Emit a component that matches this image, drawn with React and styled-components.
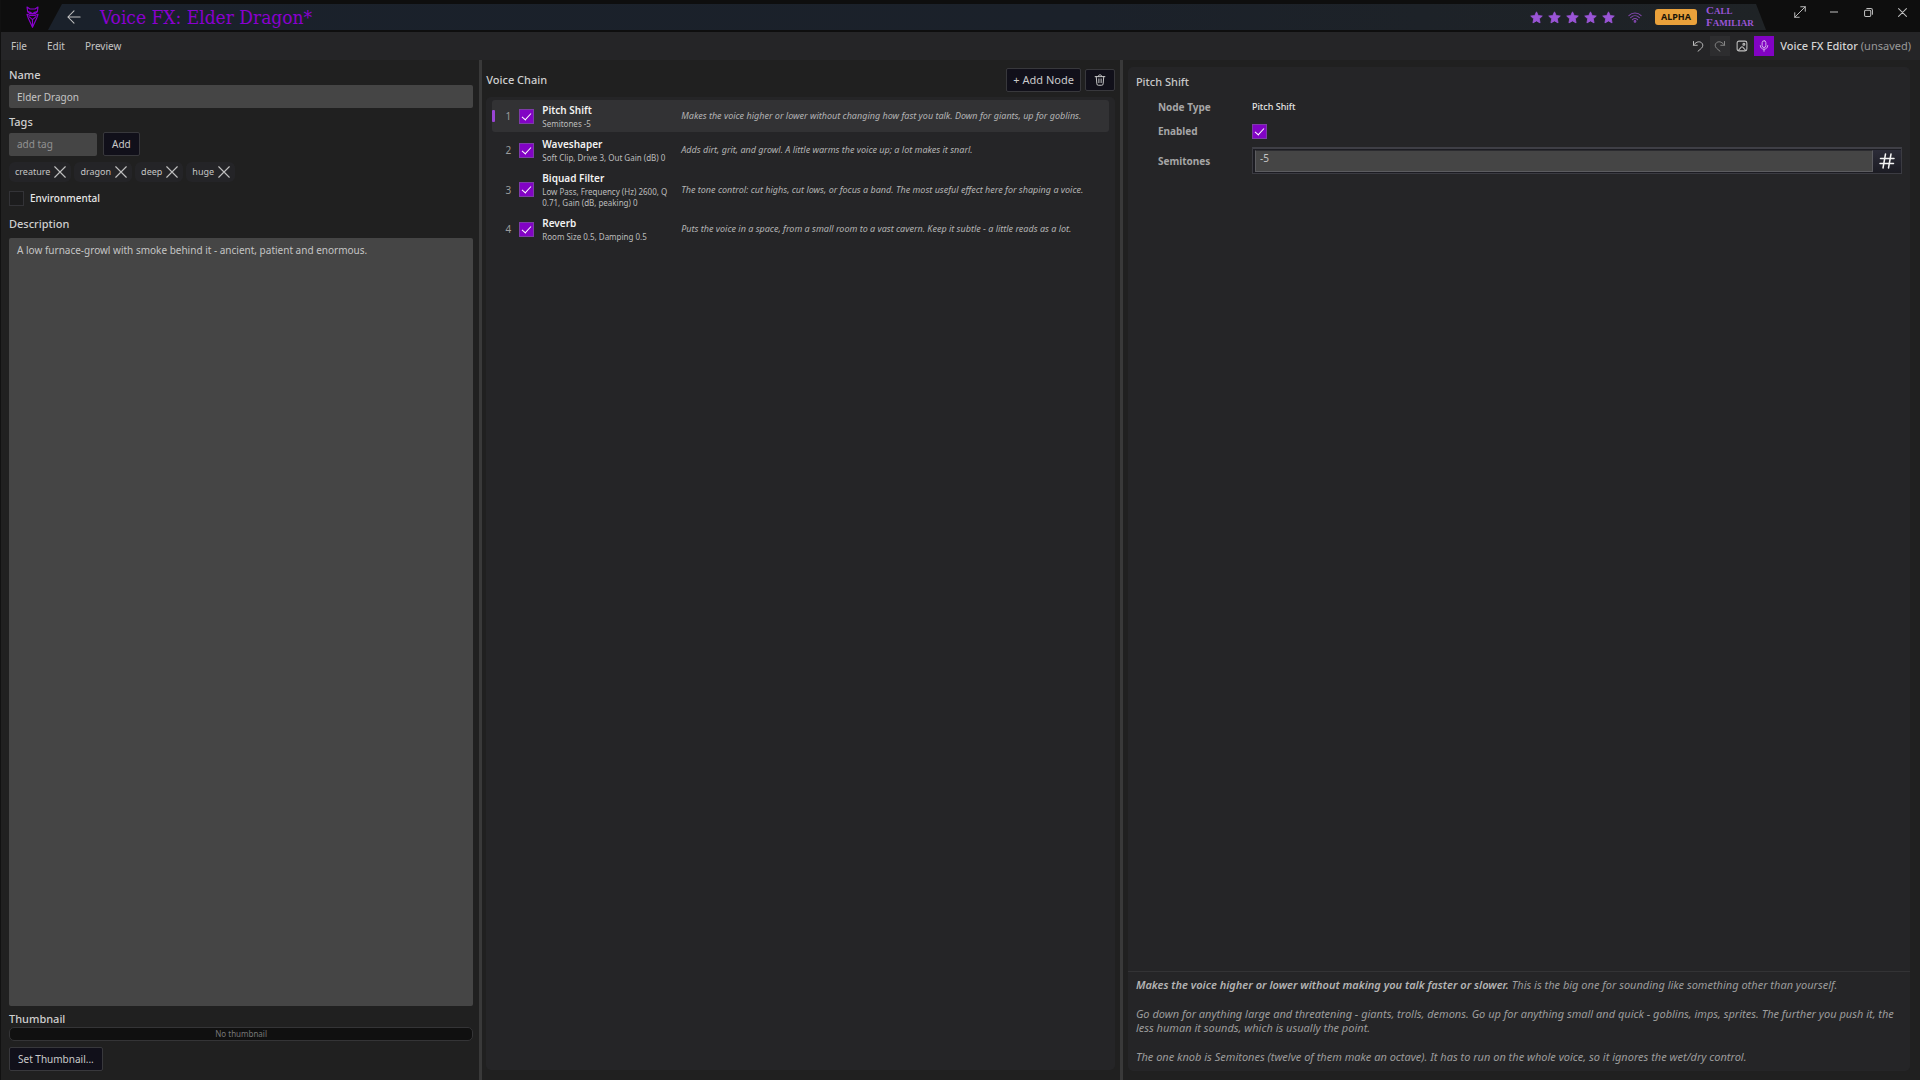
import { useState } from 'react'
import styled, { createGlobalStyle } from 'styled-components'

const GlobalStyle = createGlobalStyle`
    * {
        box-sizing: border-box;
    }

    html, body, #root {
        height: 100%;
    }

    body {
        margin: 0;
        background-color: #202020;
        color: #c4c4c4;
        font-family: "Noto Sans", sans-serif;
        font-size: 11px;
        line-height: 16px;
    }

    button, input, textarea {
        margin: 0;
        font: inherit;
        color: inherit;
    }

    h1, h2, h3, p {
        margin: 0;
    }
`

const Window = styled.div`
    display: flex;
    flex-direction: column;
    height: 100vh;
    border-left: 1px solid #111111;
`

const TitleBar = styled.header`
    display: flex;
    height: 32px;
    flex-shrink: 0;
    background-color: #0e0e0e;
`

const Logo = styled.div`
    width: 47px;
    display: flex;
    justify-content: flex-end;
    padding: 6px 9px 0 0;
`

const Ribbon = styled.div`
    flex: 1;
    height: 26px;
    margin-top: 4px;
    padding: 0 11px 0 19px;
    display: flex;
    align-items: center;
    background: linear-gradient(90deg, #1a212b, #1b212a 60%, #1f2326);
    clip-path: polygon(14px 0, calc(100% - 10px) 0, 100% 100%, 0 100%);

    h1 {
        flex: 1;
        margin-left: 19px;
        color: #8a00cf;
        font: 400 19px "DejaVu Serif Condensed", "DejaVu Serif", serif;
    }
`

const IconButton = styled.button`
    width: ${props => props.$size || 20}px;
    height: ${props => props.$size || 20}px;
    padding: 0;
    display: flex;
    justify-content: center;
    align-items: center;
    border: none;
    background-color: ${props => props.$bg || 'transparent'};
    color: ${props => props.$color || '#c0c0c0'};
    cursor: pointer;
`

const Stars = styled.div`
    display: flex;
    gap: 5px;
    margin-right: 13px;
    color: #9a55d6;
`

const Alpha = styled.span`
    width: 42px;
    height: 16px;
    margin: 0 9px 0 13px;
    border-radius: 3px;
    background-color: #e9a13b;
    color: #1a1408;
    font-size: 9px;
    font-weight: 700;
    line-height: 16px;
    text-align: center;
`

const Brand = styled.div`
    width: 49px;
    color: #9a55d6;
    font: 700 9px/11px "Liberation Serif", serif;
    text-transform: uppercase;

    span {
        display: block;
    }

    span::first-letter {
        font-size: 11px;
    }
`

const WindowControls = styled.div`
    display: flex;
    margin-left: 17px;
    padding-right: 1px;

    button {
        width: 34px;
        height: 24px;
    }
`

const MenuBar = styled.nav`
    height: 28px;
    flex-shrink: 0;
    display: flex;
    align-items: center;
    padding-right: 9px;
    background-color: #252527;
`

const MenuItem = styled.button`
    height: 24px;
    padding: 0 10px;
    border: none;
    background: none;
    font-size: 10px;

    &:hover {
        background-color: #333335;
    }
`

const Tools = styled.div`
    display: flex;
    align-items: center;
    gap: 2px;
    margin-left: auto;
`

const DocStatus = styled.p`
    margin-left: 4px;
    color: #999999;

    strong {
        color: #d4d4d4;
        font-weight: 500;
    }
`

const Panes = styled.main`
    flex: 1;
    min-height: 0;
    display: grid;
    grid-template-columns: 3fr 3px 4fr 3px 5fr;
`

const Splitter = styled.div`
    background-color: #393939;
`

const DetailsPane = styled.section`
    display: flex;
    flex-direction: column;
    align-items: flex-start;
    padding: 7px 6px 9px 8px;
`

const Label = styled.label`
    font-size: 11px;
    font-weight: 500;
    color: #cfcfcf;
`

const TextInput = styled.input`
    width: ${props => props.$width || '100%'};
    height: 23px;
    padding: 0 8px;
    border: none;
    border-radius: 2px;
    background-color: #454545;
    font-size: 10px;
    outline: none;

    &::placeholder {
        color: #929292;
    }
`

const Field = styled.div`
    width: 100%;
    display: flex;
    flex-direction: column;
    gap: 2px;
    margin-bottom: 6px;
`

const TagEntry = styled.div`
    display: flex;
    align-items: center;
    gap: 6px;
`

const Button = styled.button`
    height: ${props => props.$height || 24}px;
    padding: 0 ${props => props.$large ? 6 : 8}px;
    display: flex;
    align-items: center;
    justify-content: center;
    border: 1px solid #38383c;
    border-radius: 2px;
    background-color: #11101a;
    color: #cacaca;
    font-size: ${props => props.$large ? 11 : 10}px;
    cursor: pointer;
`

const Tags = styled.ul`
    display: flex;
    gap: 3px;
    margin: 0 0 8px;
    padding: 0;
    list-style: none;
`

const Tag = styled.li`
    height: 20px;
    display: flex;
    align-items: center;
    gap: 4px;
    padding: 0 5px 0 6px;
    border-radius: 6px;
    background-color: #242427;
    font-size: 9px;
`

const CheckBox = styled.input.attrs({ type: 'checkbox' })`
    appearance: none;
    width: 15px;
    height: 15px;
    flex-shrink: 0;
    display: grid;
    justify-content: center;
    border: 1px solid #333337;
    background-color: #1c1c1d;

    &:checked {
        border-color: #7d3ba8;
        background-color: #8203c4;
    }

    &:checked::after {
        content: "";
        width: 4px;
        height: 8px;
        margin-top: 1px;
        border: solid #ffffff;
        border-width: 0 1px 1px 0;
        transform: rotate(42deg);
    }
`

const CheckRow = styled.div`
    display: flex;
    align-items: center;
    gap: 6px;
    margin-bottom: 10px;

    label {
        color: #e6e6e6;
        font-size: 10px;
        font-weight: 500;
    }
`

const Description = styled.textarea`
    width: 100%;
    flex: 1;
    margin: 6px 0 5px;
    padding: 4px 8px;
    border: none;
    border-radius: 2px;
    background-color: #454545;
    font-size: 10px;
    resize: none;
    outline: none;
`

const Thumbnail = styled.div`
    width: 100%;
    height: 14px;
    margin-bottom: 6px;
    border: 1px solid #343436;
    border-radius: 5px;
    background-color: #101010;
    color: #777777;
    font-size: 8px;
    line-height: 12px;
    text-align: center;
`

const ChainPane = styled.section`
    display: flex;
    flex-direction: column;
    padding: 8px 5px 10px 4px;
`

const ChainHeader = styled.div`
    display: flex;
    align-items: center;
    gap: 4px;
    margin-bottom: 5px;

    h2 {
        flex: 1;
        color: #cfcfcf;
        font-size: 11px;
        font-weight: 500;
    }
`

const Card = styled.div`
    flex: 1;
    display: flex;
    flex-direction: column;
    border-radius: 5px;
    background-color: #252527;
`

const NodeList = styled.ol`
    display: flex;
    flex-direction: column;
    gap: 2px;
    margin: 0;
    padding: 3px 6px;
    list-style: none;
`

const NodeRow = styled.li`
    position: relative;
    display: grid;
    grid-template-columns: 19px 15px 131px 1fr;
    align-items: center;
    column-gap: 8px;
    padding: 3px 0;
    border-radius: 3px;
    background-color: ${props => props.$selected ? '#323234' : 'transparent'};

    &::before {
        content: "";
        display: ${props => props.$selected ? 'block' : 'none'};
        position: absolute;
        left: 0;
        top: 10px;
        bottom: 10px;
        width: 3px;
        border-radius: 1px;
        background-color: #9a45d4;
    }
`

const NodeIndex = styled.span`
    color: #9c9c9c;
    font-size: 10px;
    text-align: right;
`

const NodeInfo = styled.div`
    h3 {
        color: #f2f2f2;
        font-size: 10px;
        font-weight: 600;
        line-height: 15px;
    }

    p {
        color: #bdbdbd;
        font-size: 8px;
        line-height: 11px;
    }
`

const NodeHint = styled.p`
    color: #b4b4b4;
    font-size: 9px;
    font-style: italic;
    line-height: 12px;
`

const InspectorPane = styled.section`
    display: flex;
    padding: 7px 10px 9px 5px;
`

const InspectorTitle = styled.h2`
    padding: 7px 8px 5px;
    color: #c8c8c8;
    font-size: 11px;
    font-weight: 500;
    line-height: 16px;
`

const Properties = styled.div`
    flex: 1;
    display: grid;
    grid-template-columns: 94px 1fr;
    grid-template-rows: 24px 24px 35px;
    align-items: center;
    align-content: start;
    padding: 0 8px 0 30px;
`

const PropertyLabel = styled.label`
    color: #a6a6a6;
    font-size: 10px;
    font-weight: 700;
`

const PropertyValue = styled.span`
    color: #e4e4e4;
    font-size: 9px;
    font-weight: 500;
`

const NumberField = styled.div`
    height: 27px;
    display: flex;
    padding: 1px 0 1px 2px;
    border: 1px solid #3b3b42;
    border-top: 2px solid #3f3f46;
    background-color: #1c1c22;

    input {
        flex: 1;
        min-width: 0;
        padding: 0 4px 7px;
        border: 1px solid #5c5c60;
        border-top-color: #2c2c30;
        background-color: #454545;
        font-size: 10px;
        line-height: 14px;
        outline: none;
    }
`

const HashButton = styled(IconButton)`
    width: 28px;
    height: 100%;
    background: linear-gradient(#2c2c38, #1c1c24);
`

const Help = styled.div`
    padding: 6px 8px 7px;
    border-top: 1px solid #333335;
    color: #9c9c9c;
    font-size: 11px;
    font-style: italic;
    line-height: 14px;

    p + p {
        margin-top: 15px;
    }

    strong {
        color: #b4b4b4;
        font-weight: 600;
    }
`

const Icon = ({ size = 12, view = 16, width = 1, children }) => (
    <svg width={size} height={size} viewBox={`0 0 ${view} ${view}`} fill="none" stroke="currentColor"
        strokeWidth={width} strokeLinecap="round" strokeLinejoin="round" aria-hidden="true">
        {children}
    </svg>
)

const Star = () => (
    <svg width="13" height="13" viewBox="0 0 24 24" fill="currentColor" stroke="currentColor" strokeWidth="1.5" strokeLinejoin="round">
        <path d="M12 1.5l3.2 6.9 7.5.9-5.5 5.2 1.4 7.5L12 18.3 5.4 22l1.4-7.5L1.3 9.3l7.5-.9z" />
    </svg>
)

const LogoMark = () => (
    <svg width="13" height="22" viewBox="0 0 39 66" fill="none" stroke="#8a00cf" strokeWidth="3.4" strokeLinejoin="round">
        <path d="M3 3l9 6h15l9-6-2 14-6 6H11l-6-6z" />
        <path d="M5 17l8 2 6.5 4 6.5-4 8-2" />
        <path d="M3 25l8 3h17l8-3-4 12-12.5 27L7 37z" />
        <path d="M8 31l11.5 10L31 31M19.5 41v21" />
    </svg>
)

const nodes = [
    { name: 'Pitch Shift', summary: 'Semitones -5', hint: 'Makes the voice higher or lower without changing how fast you talk. Down for giants, up for goblins.' },
    { name: 'Waveshaper', summary: 'Soft Clip, Drive 3, Out Gain (dB) 0', hint: 'Adds dirt, grit, and growl. A little warms the voice up; a lot makes it snarl.' },
    { name: 'Biquad Filter', summary: 'Low Pass, Frequency (Hz) 2600, Q 0.71, Gain (dB, peaking) 0', hint: 'The tone control: cut highs, cut lows, or focus a band. The most useful effect here for shaping a voice.' },
    { name: 'Reverb', summary: 'Room Size 0.5, Damping 0.5', hint: 'Puts the voice in a space, from a small room to a vast cavern. Keep it subtle - a little reads as a lot.' },
]

function Header() {
    return (
        <TitleBar>
            <Logo><LogoMark /></Logo>
            <Ribbon>
                <IconButton $size={14} aria-label="Back">
                    <Icon size={14} width={1.2}><path d="M15 8H1M8 1L1 8l7 7" /></Icon>
                </IconButton>
                <h1>Voice FX: Elder Dragon*</h1>
                <Stars>{[1, 2, 3, 4, 5].map(n => <Star key={n} />)}</Stars>
                <IconButton as="span" $size={14} $color="#8247ad">
                    <Icon size={14} width={1.2}>
                        <path d="M1 6.5c4-4 10-4 14 0M3 8.8c3-3 7-3 10 0M5 11c2-1.8 4-1.8 6 0" />
                        <circle cx="8" cy="13" r="1" fill="currentColor" />
                    </Icon>
                </IconButton>
                <Alpha>ALPHA</Alpha>
                <Brand><span>Call</span><span>Familiar</span></Brand>
            </Ribbon>
            <WindowControls>
                <IconButton aria-label="Full screen">
                    <Icon width={1.3}><path d="M1 15L15 1M9 1h6v6M1 9v6h6" /></Icon>
                </IconButton>
                <IconButton aria-label="Minimize">
                    <Icon size={8}><path d="M0 8h16" strokeWidth="2" /></Icon>
                </IconButton>
                <IconButton aria-label="Restore">
                    <Icon size={9} width={1.8}>
                        <rect x="1" y="4" width="11" height="11" rx="2" />
                        <path d="M5 1h7a3 3 0 0 1 3 3v7" />
                    </Icon>
                </IconButton>
                <IconButton aria-label="Close">
                    <Icon size={9} width={1.8}><path d="M1 1l14 14M15 1L1 15" /></Icon>
                </IconButton>
            </WindowControls>
        </TitleBar>
    )
}

function Menu() {
    return (
        <MenuBar>
            <MenuItem>File</MenuItem>
            <MenuItem>Edit</MenuItem>
            <MenuItem>Preview</MenuItem>
            <Tools>
                <IconButton aria-label="Undo">
                    <Icon width={1.3}><path d="M2 2v5h5M2 7c2.5-4 7-6 10.500-3.500 3 2.500 2 6-.5 8L8 15" /></Icon>
                </IconButton>
                <IconButton aria-label="Redo" $bg="#2d2d2f" $color="#8a8a8a">
                    <Icon width={1.3}><path d="M14 2v5H9M14 7C11.500 3 7 1 3.500 3.500c-3 2.500-2 6 .5 8L8 15" /></Icon>
                </IconButton>
                <IconButton aria-label="Image">
                    <Icon width={1.4}>
                        <rect x="1.5" y="1.5" width="13" height="13" rx="2.5" />
                        <path d="M3 14l4-4.500a1.400 1.400 0 0 1 2 0L13 14" />
                        <circle cx="10.500" cy="5.500" r="1.300" />
                    </Icon>
                </IconButton>
                <IconButton aria-label="Microphone" $bg="#8203c4" $color="#d9b5ef">
                    <Icon width={1.3}>
                        <rect x="5.5" y="1" width="5" height="9" rx="2.5" />
                        <path d="M3 7.500c0 6.500 10 6.500 10 0M8 12.500V15" />
                    </Icon>
                </IconButton>
                <DocStatus><strong>Voice FX Editor</strong> (unsaved)</DocStatus>
            </Tools>
        </MenuBar>
    )
}

function Details() {
    const [tags, setTags] = useState(['creature', 'dragon', 'deep', 'huge'])
    const [tag, setTag] = useState('')

    const addTag = () => {
        if (tag && !tags.includes(tag)) setTags([...tags, tag])
        setTag('')
    }

    return (
        <DetailsPane>
            <Field>
                <Label htmlFor="name">Name</Label>
                <TextInput id="name" defaultValue="Elder Dragon" />
            </Field>
            <Field>
                <Label htmlFor="tag">Tags</Label>
                <TagEntry>
                    <TextInput id="tag" $width="88px" placeholder="add tag" value={tag} onChange={e => setTag(e.target.value)} />
                    <Button onClick={addTag}>Add</Button>
                </TagEntry>
            </Field>
            <Tags>
                {tags.map(t => (
                    <Tag key={t}>
                        {t}
                        <IconButton $size={12} aria-label={`Remove ${t}`} onClick={() => setTags(tags.filter(x => x !== t))}>
                            <Icon width={1.5}><path d="M1 1l14 14M15 1L1 15" /></Icon>
                        </IconButton>
                    </Tag>
                ))}
            </Tags>
            <CheckRow>
                <CheckBox id="environmental" />
                <label htmlFor="environmental">Environmental</label>
            </CheckRow>
            <Label htmlFor="description">Description</Label>
            <Description id="description" defaultValue="A low furnace-growl with smoke behind it - ancient, patient and enormous." />
            <Label as="h2">Thumbnail</Label>
            <Thumbnail>No thumbnail</Thumbnail>
            <Button>Set Thumbnail...</Button>
        </DetailsPane>
    )
}

function Chain({ selected, onSelect }) {
    return (
        <ChainPane>
            <ChainHeader>
                <h2>Voice Chain</h2>
                <Button $large>+ Add Node</Button>
                <Button $height={22} aria-label="Delete node">
                    <Icon width={1.3}>
                        <path d="M1.5 3.5h13M5.5 3.5c0-3.3 5-3.3 5 0M3 3.5l.8 9.5a2 2 0 0 0 2 2h4.4a2 2 0 0 0 2-2L13 3.5M6.5 6.5v5M9.5 6.5v5" />
                    </Icon>
                </Button>
            </ChainHeader>
            <Card>
                <NodeList>
                    {nodes.map((node, i) => (
                        <NodeRow key={node.name} $selected={i === selected} onClick={() => onSelect(i)}>
                            <NodeIndex>{i + 1}</NodeIndex>
                            <CheckBox defaultChecked aria-label={`Enable ${node.name}`} />
                            <NodeInfo>
                                <h3>{node.name}</h3>
                                <p>{node.summary}</p>
                            </NodeInfo>
                            <NodeHint>{node.hint}</NodeHint>
                        </NodeRow>
                    ))}
                </NodeList>
            </Card>
        </ChainPane>
    )
}

function Inspector() {
    return (
        <InspectorPane>
            <Card>
                <InspectorTitle>Pitch Shift</InspectorTitle>
                <Properties>
                    <PropertyLabel as="span">Node Type</PropertyLabel>
                    <PropertyValue>Pitch Shift</PropertyValue>
                    <PropertyLabel htmlFor="enabled">Enabled</PropertyLabel>
                    <CheckBox id="enabled" defaultChecked />
                    <PropertyLabel htmlFor="semitones">Semitones</PropertyLabel>
                    <NumberField>
                        <input id="semitones" defaultValue="-5" />
                        <HashButton $color="#f4f4f4" aria-label="Number value">
                            <Icon size={16} width={1.5}><path d="M6.5 1L4 15M12 1L9.5 15M1.5 5.5h13.5M1 10.5h13.5" /></Icon>
                        </HashButton>
                    </NumberField>
                </Properties>
                <Help>
                    <p><strong>Makes the voice higher or lower without making you talk faster or slower.</strong> This is the big one for sounding like something other than yourself.</p>
                    <p>Go down for anything large and threatening - giants, trolls, demons. Go up for anything small and quick - goblins, imps, sprites. The further you push it, the less human it sounds, which is usually the point.</p>
                    <p>The one knob is Semitones (twelve of them make an octave). It has to run on the whole voice, so it ignores the wet/dry control.</p>
                </Help>
            </Card>
        </InspectorPane>
    )
}

export default function App() {

    const [selected, setSelected] = useState(0)

    return (
        <Window>
            <GlobalStyle />
            <Header />
            <Menu />
            <Panes>
                <Details />
                <Splitter />
                <Chain selected={selected} onSelect={setSelected} />
                <Splitter />
                <Inspector />
            </Panes>
        </Window>
    )
}
